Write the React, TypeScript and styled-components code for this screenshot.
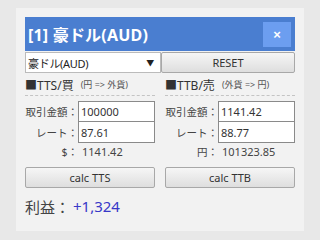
import * as React from "react"
import styled, { createGlobalStyle } from "styled-components"

const Global = createGlobalStyle`
  html, body {
    margin: 0;
    padding: 0;
    background: #e8e8e8;
  }
  body {
    font-family: "Noto Sans", "Noto Sans CJK JP", sans-serif;
  }
`

const Panel = styled.div`
  margin: 8px 16px 0;
  width: 270px;
  height: 205px;
  padding: 9px;
  background: #f2f2f2;
`
const Header = styled.div`
  height: 34px;
  background: #4a7ed0;
  display: flex;
  align-items: center;
  justify-content: space-between;
  padding: 0 4px 0 3px;
`
const Title = styled.div`
  color: #fff;
  font-weight: bold;
  font-size: 16px;
  letter-spacing: 0.2px;
`
const Close = styled.button`
  width: 28px;
  height: 25px;
  border: none;
  background: #6c9ef0;
  color: #fff;
  font-size: 13px;
  font-weight: bold;
  font-family: "Liberation Sans", sans-serif;
  padding: 0;
`
const Toolbar = styled.div`
  display: grid;
  grid-template-columns: 136px 134px;
  margin-top: 1px;
  height: 21px;
`
const Select = styled.div`
  background: #fff;
  border: 1px solid #bbb;
  display: flex;
  align-items: center;
  justify-content: space-between;
  padding: 0 6px 0 2px;
  font-size: 11px;
  color: #222;
  box-sizing: border-box;
  letter-spacing: -0.3px;
`
const Arrow = styled.span`
  font-size: 8px;
`
const Button = styled.button`
  border: 1px solid #a8a8a8;
  border-radius: 2px;
  background: linear-gradient(#f6f6f6, #dedede);
  font-family: "Noto Sans", sans-serif;
  font-size: 11px;
  color: #333;
  padding: 0;
  height: 21px;
  box-sizing: border-box;
  width: 100%;
`
const Columns = styled.div`
  display: grid;
  grid-template-columns: 130px 130px;
  column-gap: 10px;
`
const Section = styled.div`
  display: flex;
  flex-direction: column;
`
const SectionHead = styled.div`
  height: 21px;
  display: flex;
  align-items: center;
  gap: 7px;
  border-bottom: 1px dashed #c4c4c4;
  font-size: 12px;
  color: #333;
  margin-top: 1px;
  white-space: nowrap;
`
const Note = styled.span`
  font-size: 9px;
  color: #555;
`
const Form = styled.div`
  display: grid;
  grid-template-columns: 53px 77px;
  grid-template-rows: 21px 21px 16px;
  margin-top: 5px;
`
const Label = styled.div`
  font-size: 10.5px;
  color: #444;
  display: flex;
  align-items: center;
  justify-content: flex-end;
  white-space: nowrap;
`
const Input = styled.div<{ last?: boolean }>`
  background: #fff;
  border: 1px solid #8a8a8a;
  border-top-width: ${({ last }) => (last ? "0" : "1px")};
  display: flex;
  align-items: center;
  padding-left: 2px;
  font-size: 11px;
  color: #333;
`
const ResultValue = styled.div`
  font-size: 11px;
  color: #444;
  display: flex;
  align-items: center;
  padding-left: 4px;
`
const Actions = styled.div`
  display: grid;
  grid-template-columns: 130px 130px;
  column-gap: 10px;
  margin-top: 8px;
`
const Profit = styled.div`
  margin-top: 8px;
  font-size: 15px;
  color: #444;
  display: flex;
  gap: 3px;
`
const Amount = styled.span`
  color: #3838c8;
`

const Calc = (props: {
  title: string
  note: string
  amount: string
  rate: string
  unit: string
  result: string
}) => (
  <Section>
    <SectionHead>
      <span>■{props.title}</span>
      <Note>{props.note}</Note>
    </SectionHead>
    <Form>
      <Label>取引金額：</Label>
      <Input>{props.amount}</Input>
      <Label>レート：</Label>
      <Input last>{props.rate}</Input>
      <Label>{props.unit}：</Label>
      <ResultValue>{props.result}</ResultValue>
    </Form>
  </Section>
)

export default function App() {
  return (
    <>
      <Global />
      <Panel>
        <Header>
          <Title>[1] 豪ドル(AUD)</Title>
          <Close>×</Close>
        </Header>
        <Toolbar>
          <Select>
            <span>豪ドル(AUD)</span>
            <Arrow>▼</Arrow>
          </Select>
          <Button>RESET</Button>
        </Toolbar>
        <Columns>
          <Calc title="TTS/買" note="(円 => 外貨)" amount="100000" rate="87.61" unit="$" result="1141.42" />
          <Calc title="TTB/売" note="(外貨 => 円)" amount="1141.42" rate="88.77" unit="円" result="101323.85" />
        </Columns>
        <Actions>
          <Button>calc TTS</Button>
          <Button>calc TTB</Button>
        </Actions>
        <Profit>
          <span>利益：</span>
          <Amount>+1,324</Amount>
        </Profit>
      </Panel>
    </>
  )
}
